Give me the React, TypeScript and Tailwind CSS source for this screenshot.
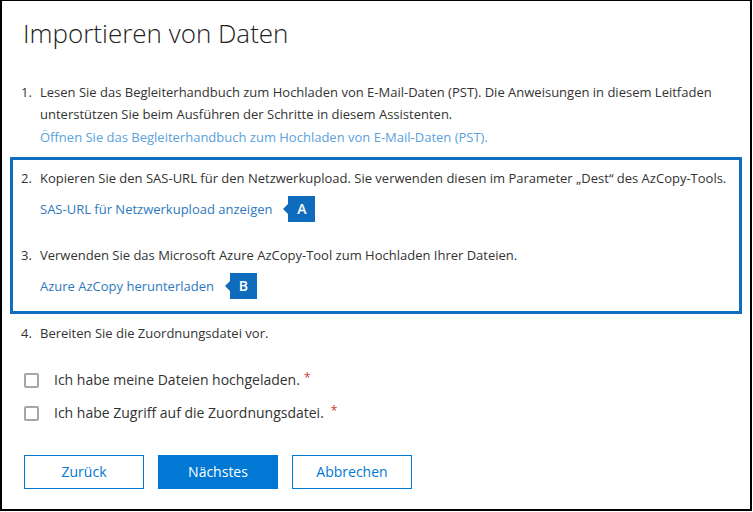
import React from "react";

const font = { fontFamily: '"Segoe UI", "Open Sans", "Noto Sans", sans-serif' };

function Badge({ label }: { label: string }) {
  return (
    <span className="relative ml-[16px] inline-flex h-[26px] w-[27px] items-center justify-center bg-[#0f6cbd] text-[14px] font-semibold text-white">
      <span className="absolute left-[-5px] top-[8px] h-0 w-0 border-y-[5px] border-r-[5px] border-y-transparent border-r-[#0f6cbd]" />
      {label}
    </span>
  );
}

function Checkbox({ label, gap }: { label: string; gap: string }) {
  return (
    <div className="flex h-[22px] items-center">
      <span className="ml-[22px] box-border h-[15px] w-[15px] rounded-[2px] border-2 border-[#a6a6a6]" />
      <span className="ml-[15px] text-[14px] text-[#333]">{label}</span>
      <span className={`${gap} relative top-[-2px] text-[12px] leading-[14px] text-[#d13438]`}>*</span>
    </div>
  );
}

export default function App() {
  return (
    <div className="h-[512px] w-[753px] bg-white" style={font}>
      <div className="box-border h-[511px] w-[752px] border-b-2 border-l-2 border-r-2 border-t border-black">
        <h1 className="ml-[21px] mt-[14px] text-[26px] font-light leading-[36px] text-[#222]">
          Importieren von Daten
        </h1>
        <div className="mt-[30px] text-[13px] leading-[22px] text-[#333]">
          <div className="flex">
            <span className="ml-[19px] w-[19px]">1.</span>
            <div className="whitespace-nowrap">
              Lesen Sie das Begleiterhandbuch zum Hochladen von E-Mail-Daten (PST). Die Anweisungen in diesem Leitfaden
              <br />
              unterstützen Sie beim Ausführen der Schritte in diesem Assistenten.
              <div className="mt-[1px] text-[#5aa1dd]">Öffnen Sie das Begleiterhandbuch zum Hochladen von E-Mail-Daten (PST).</div>
            </div>
          </div>
          <div className="ml-[8px] mt-[9px] box-border h-[157px] w-[732px] border-[3px] border-[#106ebe] pt-[7px]">
            <div className="flex">
              <span className="ml-[8px] w-[19px]">2.</span>
              <div className="whitespace-nowrap">
                Kopieren Sie den SAS-URL für den Netzwerkupload. Sie verwenden diesen im Parameter „Dest“ des AzCopy-Tools.
                <div className="mt-[7px] flex items-center text-[#2e78c0]">
                  SAS-URL für Netzwerkupload anzeigen
                  <Badge label="A" />
                </div>
              </div>
            </div>
            <div className="mt-[22px] flex">
              <span className="ml-[8px] w-[19px]">3.</span>
              <div className="whitespace-nowrap">
                Verwenden Sie das Microsoft Azure AzCopy-Tool zum Hochladen Ihrer Dateien.
                <div className="mt-[7px] flex items-center text-[#2e78c0]">
                  Azure AzCopy herunterladen
                  <Badge label="B" />
                </div>
              </div>
            </div>
          </div>
          <div className="mt-[8px] flex">
            <span className="ml-[19px] w-[19px]">4.</span>
            <span>Bereiten Sie die Zuordnungsdatei vor.</span>
          </div>
          <div className="mt-[25px]">
            <Checkbox label="Ich habe meine Dateien hochgeladen." gap="ml-[4px]" />
          </div>
          <div className="mt-[11px]">
            <Checkbox label="Ich habe Zugriff auf die Zuordnungsdatei." gap="ml-[7px]" />
          </div>
          <div className="ml-[22px] mt-[31px] flex gap-[14px] text-[14px]">
            <button className="box-border h-[34px] w-[120px] border border-[#0078d4] bg-white text-[#0078d4]">Zurück</button>
            <button className="box-border h-[34px] w-[120px] border border-[#0078d4] bg-[#0078d4] text-white">Nächstes</button>
            <button className="box-border h-[34px] w-[120px] border border-[#0078d4] bg-white text-[#0078d4]">Abbrechen</button>
          </div>
        </div>
      </div>
    </div>
  );
}
